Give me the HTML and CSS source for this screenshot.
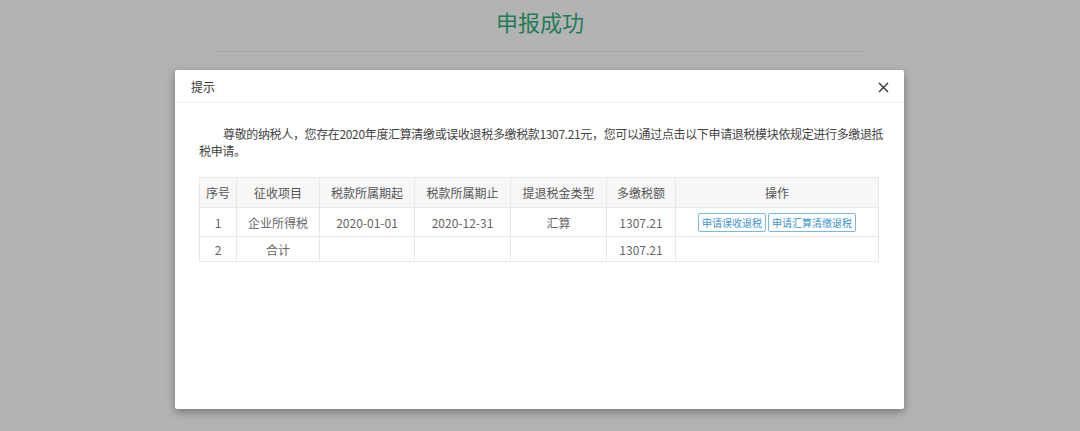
FILE: index.html
```html
<!DOCTYPE html>
<html lang="zh-CN">
<head>
  <meta charset="UTF-8" />
  <title>申报成功</title>
  <link rel="stylesheet" href="styles.css">
</head>
<body>
  <div class="page">
    <h2 class="page-title">申报成功</h2>
    <div class="page-line"></div>
  </div>

  <!-- 提示弹窗 -->
  <div class="modal">
    <div class="modal-head">
      <span>提示</span>
      <svg class="close" width="11" height="11" viewBox="0 0 11 11"><path d="M1 1 L10 10 M10 1 L1 10" stroke="#333" stroke-width="1.4" fill="none"/></svg>
    </div>
    <div class="modal-body">
      <p class="notice">尊敬的纳税人，您存在2020年度汇算清缴或误收退税多缴税款1307.21元，您可以通过点击以下申请退税模块依规定进行多缴退抵税申请。</p>
      <table class="tax-table">
        <colgroup>
          <col style="width:37px"><col style="width:83px"><col style="width:95px"><col style="width:96px"><col style="width:96px"><col style="width:69px"><col>
        </colgroup>
        <thead>
          <tr><th>序号</th><th>征收项目</th><th>税款所属期起</th><th>税款所属期止</th><th>提退税金类型</th><th>多缴税额</th><th>操作</th></tr>
        </thead>
        <tbody>
          <tr class="row-main">
            <td>1</td><td>企业所得税</td><td>2020-01-01</td><td>2020-12-31</td><td>汇算</td><td>1307.21</td>
            <td><button class="btn">申请误收退税</button><button class="btn">申请汇算清缴退税</button></td>
          </tr>
          <tr class="row-sum">
            <td>2</td><td>合计</td><td></td><td></td><td></td><td>1307.21</td><td></td>
          </tr>
        </tbody>
      </table>
    </div>
  </div>
</body>
</html>
```

FILE: styles.css
```css
/* ===== 基础 ===== */
* { box-sizing: border-box; margin: 0; padding: 0; }
body { font-family: "Noto Sans CJK SC", "Open Sans", sans-serif; background: #b3b3b3; color: #555; width: 1080px; height: 431px; overflow: hidden; }

/* ===== 页面标题（遮罩下） ===== */
.page { padding-top: 5px; }
.page-title { text-align: center; font-size: 22px; font-weight: normal; color: #1f7c57; line-height: 32px; }
.page-line { width: 648px; margin: 14px 0 0 215px; border-top: 1px solid #a2a2a2; }

/* ===== 弹窗 ===== */
.modal { position: absolute; left: 175px; top: 70px; width: 729px; height: 339px; background: #fff; border-radius: 2px; box-shadow: 0 3px 8px rgba(0,0,0,0.35); }
.modal-head { height: 33px; display: flex; align-items: center; justify-content: space-between; padding: 0 15px 0 16px; border-bottom: 1px solid #f0f0f0; font-size: 12px; color: #333; }
.close { margin-top: 2px; }
.modal-body { padding: 22px 25px 0 24px; }

.notice { font-size: 12px; line-height: 17px; text-indent: 24px; color: #444; letter-spacing: -0.35px; margin-right: -6px; }

/* ===== 表格 ===== */
.tax-table { width: 680px; margin-top: 18px; border-collapse: collapse; table-layout: fixed; font-size: 12px; color: #666; }
.tax-table th, .tax-table td { border: 1px solid #e8e8e8; text-align: center; font-weight: normal; white-space: nowrap; }
.tax-table th { height: 30px; background: #f7f7f7; color: #555; }
.row-main td { height: 29px; }
.row-sum td { height: 25px; }

.btn { font-family: inherit; font-size: 10px; line-height: 13px; padding: 2px 3px; margin: 0 1px; background: #fff; color: #3d94cf; border: 1px solid #7ab8e0; border-radius: 2px; vertical-align: middle; }
```
